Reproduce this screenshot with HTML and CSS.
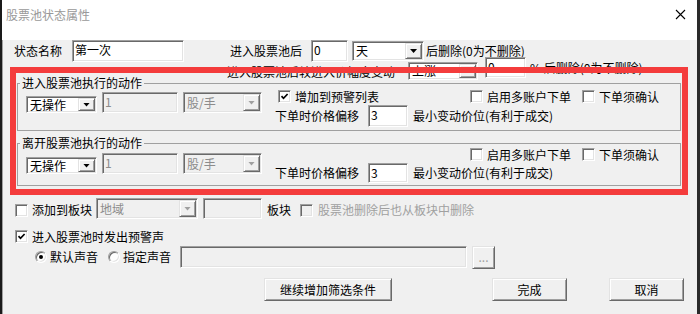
FILE: index.html
```html
<!DOCTYPE html>
<html lang="zh-CN">
<head>
  <meta charset="UTF-8">
  <title>股票池状态属性</title>
  <link rel="stylesheet" href="styles.css">
</head>
<body>
  <div class="dlg">
    <div class="caption">
      <span class="cap-text">股票池状态属性</span>
      <svg class="close" width="11" height="11" viewBox="0 0 11 11"><path d="M1 1L10 10M10 1L1 10" stroke="#000" stroke-width="1.1" fill="none"/></svg>
    </div>
    <div class="client">
      <div class="row row1">
        <span>状态名称</span>
        <div class="sunk edit e-name">第一次</div>
        <span class="l-enter">进入股票池后</span>
        <div class="sunk edit e-days">0</div>
        <div class="sunk combo c-days"><span class="val">天</span><span class="raise drop"><i class="tri"></i></span></div>
        <span class="l-del">后删除(0为不删除)</span>
      </div>
      <div class="row row2">
        <span class="l-pct">进入股票池后较进入价幅度变动</span>
        <div class="sunk combo c-dir"><span class="val">上涨</span><span class="raise drop"><i class="tri"></i></span></div>
        <div class="sunk edit e-pct">0</div>
        <span class="l-pct2">% 后删除(0为不删除)</span>
      </div>

      <fieldset class="grp grp-in">
        <legend>进入股票池执行的动作</legend>
        <div class="grid">
          <div class="acts">
            <div class="sunk combo c-act"><span class="val">无操作</span><span class="raise drop"><i class="tri"></i></span></div>
            <div class="sunk edit off e-qty">1</div>
            <div class="sunk combo off c-unit"><span class="val">股/手</span><span class="raise drop"><i class="tri"></i></span></div>
          </div>
          <label class="chk warn"><span class="sunk box"><svg width="9" height="9" viewBox="0 0 9 9"><path d="M1.5 4.2L3.5 6.3L7.6 2" stroke="#000" stroke-width="1.7" fill="none"/></svg></span>增加到预警列表</label>
          <div class="opts">
            <label class="chk"><span class="sunk box"></span>启用多账户下单</label>
            <label class="chk"><span class="sunk box"></span>下单须确认</label>
          </div>
          <div class="offset">
            <span>下单时价格偏移</span>
            <div class="sunk edit e-tick">3</div>
            <span class="l-tick">最小变动价位(有利于成交)</span>
          </div>
        </div>
      </fieldset>

      <fieldset class="grp grp-out">
        <legend>离开股票池执行的动作</legend>
        <div class="grid">
          <div class="acts">
            <div class="sunk combo c-act"><span class="val">无操作</span><span class="raise drop"><i class="tri"></i></span></div>
            <div class="sunk edit off e-qty">1</div>
            <div class="sunk combo off c-unit"><span class="val">股/手</span><span class="raise drop"><i class="tri"></i></span></div>
          </div>
          <div class="opts">
            <label class="chk"><span class="sunk box"></span>启用多账户下单</label>
            <label class="chk"><span class="sunk box"></span>下单须确认</label>
          </div>
          <div class="offset">
            <span>下单时价格偏移</span>
            <div class="sunk edit e-tick">3</div>
            <span class="l-tick">最小变动价位(有利于成交)</span>
          </div>
        </div>
      </fieldset>

      <div class="row row3">
        <label class="chk"><span class="sunk box"></span>添加到板块</label>
        <div class="sunk combo off c-area"><span class="val">地域</span><span class="raise drop"><i class="tri"></i></span></div>
        <div class="sunk edit off e-blk"></div>
        <span class="l-blk">板块</span>
        <label class="chk dis c-sync"><span class="sunk box off"></span>股票池删除后也从板块中删除</label>
      </div>
      <div class="row row4">
        <label class="chk"><span class="sunk box"><svg width="9" height="9" viewBox="0 0 9 9"><path d="M1.5 4.2L3.5 6.3L7.6 2" stroke="#000" stroke-width="1.7" fill="none"/></svg></span>进入股票池时发出预警声</label>
      </div>
      <div class="row row5">
        <label class="rd"><span class="radio"><i class="dot"></i></span>默认声音</label>
        <label class="rd rd2"><span class="radio"></span>指定声音</label>
        <div class="sunk edit off e-file"></div>
        <div class="raise btn b-browse">...</div>
      </div>
      <div class="row row6">
        <div class="raise btn b-more">继续增加筛选条件</div>
        <div class="raise btn b-ok">完成</div>
        <div class="raise btn b-cancel">取消</div>
      </div>
    </div>
    <div class="mark"></div>
  </div>
</body>
</html>
```

FILE: styles.css
```css
*{
  margin: 0;
  padding: 0;
  box-sizing: border-box;
}
body{
  background: #fff;
  font-family: "Noto Sans CJK SC", "Liberation Sans", sans-serif;
  font-size: 12px;
  line-height: 14px;
  color: #000;
}

.dlg{
  position: relative;
  width: 700px;
  height: 314px;
  border-left: 2px solid #1a1a1a;
  border-right: 3px solid #2a2a2a;
}
.caption{
  height: 29px;
  background: #fff;
  display: flex;
  align-items: center;
  justify-content: space-between;
  padding: 0 11px 0 4px;
}
.cap-text{
  color: #999;
}
.client{
  height: 284px;
  background: #f0f0f0;
  border-left: 1px solid #a0a0a0;
  border-bottom: 1px solid #a0a0a0;
}

/* 3d edges */
.sunk{
  background: #fff;
  border: 1px solid;
  border-color: #a0a0a0 #fff #fff #a0a0a0;
  box-shadow: inset 1px 1px #696969, inset -1px -1px #e3e3e3;
}
.raise{
  background: #f0f0f0;
  border: 1px solid;
  border-color: #e3e3e3 #696969 #696969 #e3e3e3;
  box-shadow: inset 1px 1px #fff, inset -1px -1px #a0a0a0;
}
.off{
  background: #f0f0f0;
  color: #8c8c8c;
}

.edit{
  padding: 2px 0 0 2px;
  flex: none;
}
.combo{
  display: flex;
  padding: 1px;
  flex: none;
}
.combo .val{
  flex: 1;
  padding-left: 2px;
  display: flex;
  align-items: center;
  white-space: nowrap;
}
.drop{
  width: 17px;
  display: flex;
  align-items: center;
  justify-content: center;
}
.tri{
  width: 7px;
  height: 4px;
  background: #000;
  clip-path: polygon(0 0, 100% 0, 50% 100%);
}
.off .tri{
  background: #a0a0a0;
}

.row{
  display: flex;
  align-items: center;
}
.row1{
  height: 22px;
  margin: 11px 0 0 11px;
}
.e-name{ width: 112px; height: 22px; margin-left: 10px; }
.l-enter{ margin-left: 46px; }
.e-days{ width: 37px; height: 22px; margin-left: 9px; }
.c-days{ width: 72px; height: 20px; margin-left: 4px; }
.l-del{ margin-left: 2px; }

.row2{
  height: 23px;
  margin: -5px 0 0 224px;
  align-items: flex-start;
}
.l-pct{ align-self: flex-end; margin-bottom: 1px; }
.c-dir{ width: 70px; height: 18px; margin-left: 13px; align-self: flex-end; }
.e-pct{ width: 41px; height: 21px; margin-left: 7px; }
.l-pct2{ margin: 4px 0 0 4px; }

/* group boxes */
.grp{
  width: 664px;
  margin-left: 14px;
  border: 1px solid #a0a0a0;
  padding: 0 0 3px 0;
}
.grp legend{
  margin-left: 2px;
  padding: 0 2px;
  line-height: 14px;
}
.grp-in{ margin-top: -4px; }
.grp-out{ margin-top: 5px; padding-bottom: 2px; }
.grid{
  display: grid;
  grid-template-columns: 249px 195px 1fr;
  grid-template-rows: 13px 22px;
  grid-template-areas: "acts warn opts" "acts off off";
  row-gap: 2px;
  padding-left: 8px;
}
.grp-out .grid{
  margin-top: -2px;
  grid-template-rows: 13px 20px;
}
.acts{
  grid-area: acts;
  align-self: start;
  display: flex;
  align-items: flex-end;
  margin-top: 2px;
}
.grp-out .acts{ margin-top: 5px; }
.c-act{ width: 71px; height: 17px; }
.e-qty{ width: 76px; height: 21px; margin-left: 5px; }
.c-unit{ width: 79px; height: 21px; margin-left: 5px; }
.warn{ grid-area: warn; margin-left: 3px; }
.opts{
  grid-area: opts;
  display: flex;
}
.opts .chk + .chk{ margin-left: 11px; }
.offset{
  grid-area: off;
  display: flex;
  align-items: center;
}
.e-tick{ width: 40px; align-self: stretch; margin-left: 9px; }
.l-tick{ margin-left: 5px; }

.chk{
  display: flex;
  align-items: center;
  gap: 4px;
  white-space: nowrap;
}
.box{
  width: 13px;
  height: 13px;
  flex: none;
  display: flex;
  align-items: center;
  justify-content: center;
}
.dis{ color: #a0a0a0; }

.row3{
  height: 21px;
  margin: 12px 0 0 12px;
}
.row3 .chk{ margin-top: 3px; }
.c-area{ width: 102px; height: 21px; margin-left: 4px; }
.e-blk{ width: 59px; height: 21px; margin-left: 5px; }
.l-blk{ margin: 3px 0 0 5px; }
.c-sync{ margin-left: 9px; gap: 5px; }

.row4{
  height: 13px;
  margin: 11px 0 0 12px;
}

.row5{
  height: 24px;
  margin: 2px 0 0 32px;
}
.rd{
  display: flex;
  align-items: center;
  gap: 3px;
}
.rd2{ margin-left: 10px; }
.radio{
  width: 12px;
  height: 12px;
  border-radius: 50%;
  border: 1px solid;
  border-color: #a0a0a0 #fff #fff #a0a0a0;
  box-shadow: inset 1px 1px #696969, inset -1px -1px #e3e3e3;
  background: #fff;
  display: flex;
  align-items: center;
  justify-content: center;
}
.dot{
  width: 4px;
  height: 4px;
  border-radius: 50%;
  background: #000;
}
.e-file{ width: 287px; height: 22px; margin-left: 9px; }
.b-browse{ width: 23px; height: 23px; margin-left: 5px; color: #a0a0a0; }

.row6{
  height: 23px;
  margin: 9px 0 0 261px;
}
.btn{
  height: 23px;
  display: flex;
  align-items: center;
  justify-content: center;
}
.b-more{ width: 128px; }
.b-ok{ width: 75px; margin-left: 100px; }
.b-cancel{ width: 75px; margin-left: 42px; }

/* annotation frame on top */
.mark{
  position: absolute;
  left: 8px;
  top: 67px;
  width: 678px;
  height: 128px;
  border: 6px solid #f43c3c;
}
```
